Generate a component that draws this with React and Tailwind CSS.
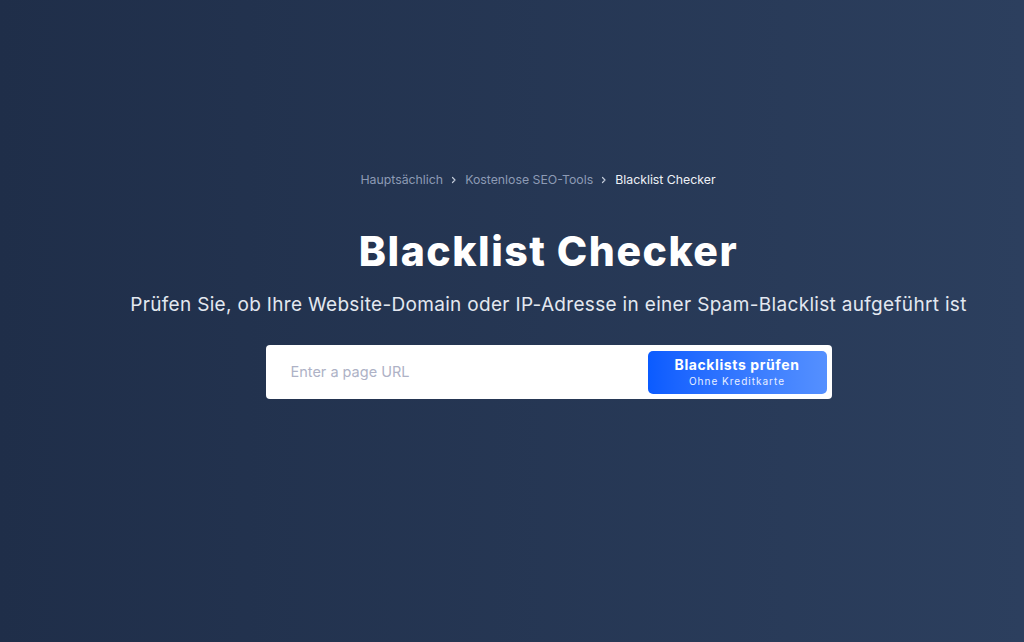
import React from "react";

function Chevron() {
  return (
    <svg width="8" height="8" viewBox="0 0 8 8" className="mx-[7px]" fill="none">
      <path d="M2.5 1.5 L5 4 L2.5 6.5" stroke="#c3cbd9" strokeWidth="1.2" strokeLinecap="round" strokeLinejoin="round" />
    </svg>
  );
}

export default function App() {
  return (
    <div
      className="w-full h-[642px] bg-gradient-to-r from-[#1f2e49] to-[#2c3f5e] flex flex-col items-center pl-[73px]"
      style={{ fontFamily: "Inter, 'Open Sans', sans-serif" }}
    >
      <nav className="mt-[172px] mr-[21px] flex items-center text-[12.3px] leading-[16px]">
        <span className="text-[#8d9bb5]">Hauptsächlich</span>
        <Chevron />
        <span className="text-[#8d9bb5]">Kostenlose SEO-Tools</span>
        <Chevron />
        <span className="text-[#eef1f6]">Blacklist Checker</span>
      </nav>
      <h1 className="mt-[39px] text-[41px] leading-[48px] font-extrabold text-white tracking-[1.5px]">
        Blacklist Checker
      </h1>
      <p className="mt-[17px] text-[19px] leading-[26px] text-[#e3e8f0] tracking-[0.32px]">
        Prüfen Sie, ob Ihre Website-Domain oder IP-Adresse in einer Spam-Blacklist aufgeführt ist
      </p>
      <div className="mt-[27px] w-[566px] h-[54px] bg-white rounded-[4px] flex items-center pl-[25px] pr-[5px]">
        <input
          className="flex-1 outline-none text-[14.5px] text-[#333] placeholder:text-[#aeb2c6] bg-transparent"
          placeholder="Enter a page URL"
        />
        <button className="w-[179px] h-[43px] rounded-[5px] bg-gradient-to-r from-[#0a5bff] to-[#5590ff] flex flex-col items-center justify-center text-white">
          <span className="text-[14px] leading-[17px] font-bold tracking-[0.6px]">Blacklists prüfen</span>
          <span className="text-[10px] leading-[13px] mt-[2px] tracking-[1px] text-[#e8efff]">Ohne Kreditkarte</span>
        </button>
      </div>
    </div>
  );
}
